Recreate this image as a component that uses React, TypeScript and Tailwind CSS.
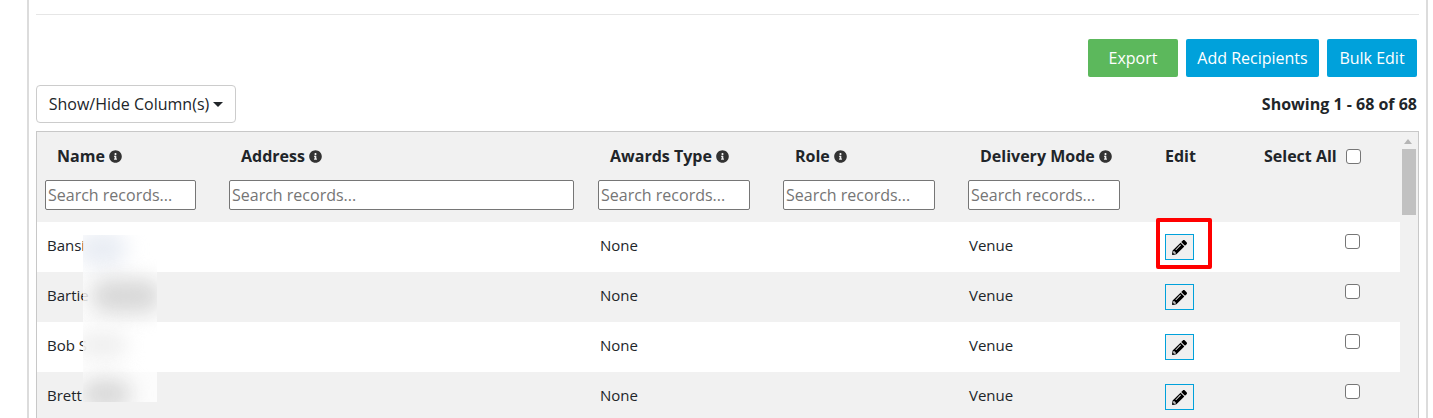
import { FaInfoCircle, FaPencilAlt } from "react-icons/fa";

const font = "font-['Open_Sans',sans-serif]";

const columns = [
  { label: "Name", width: "w-[184px]", inputWidth: "w-[151px]" },
  { label: "Address", width: "w-[369px]", inputWidth: "w-[345px]" },
  { label: "Awards Type", width: "w-[185px]", inputWidth: "w-[152px]" },
  { label: "Role", width: "w-[185px]", inputWidth: "w-[152px]" },
  { label: "Delivery Mode", width: "w-[185px]", inputWidth: "w-[152px]" },
];

const rows = [
  { name: "Bansi", bg: "bg-white" },
  { name: "Bartie", bg: "bg-[#f1f1f1]" },
  { name: "Bob S", bg: "bg-white" },
  { name: "Brett", bg: "bg-[#f1f1f1]" },
];

function Checkbox() {
  return <span className="block h-[15px] w-[15px] rounded-[3px] border border-[#767676] bg-white" />;
}

function HeaderCell({ label, width, inputWidth }: (typeof columns)[number]) {
  return (
    <div className={`${width} shrink-0 pt-[13px]`}>
      <div className="flex h-[22px] items-center gap-[4px] pl-[20px] text-[16px] font-bold text-[#212529]">
        {label}
        <FaInfoCircle className="h-[13px] w-[13px] text-[#333]" />
      </div>
      <div className="pl-[8px] pt-[13px]">
        <input
          placeholder="Search records..."
          className={`${inputWidth} h-[30px] rounded-[2px] border border-[#767676] bg-white px-[2px] text-[16px] text-[#333] placeholder:text-[#757575]`}
        />
      </div>
    </div>
  );
}

function Row({ name, bg }: { name: string; bg: string }) {
  return (
    <div className={`flex h-[50px] ${bg} text-[15px] text-[#212529]`}>
      <div className="flex w-[184px] shrink-0 items-center pb-[3px] pl-[10px]">{name}</div>
      <div className="w-[369px] shrink-0" />
      <div className="flex w-[185px] shrink-0 items-center pb-[3px] pl-[10px]">None</div>
      <div className="w-[185px] shrink-0" />
      <div className="flex w-[185px] shrink-0 items-center pb-[3px] pl-[9px]">Venue</div>
      <div className="w-[200px] shrink-0 pl-[20px] pt-[12px]">
        <button className="flex h-[26px] w-[29px] items-center justify-center border border-[#00a1db] bg-[#f0f0f0]">
          <FaPencilAlt className="h-[15px] w-[15px] text-black" />
        </button>
      </div>
      <div className="pt-[12px]">
        <Checkbox />
      </div>
    </div>
  );
}

export default function App() {
  return (
    <div className={`h-[418px] w-[1433px] overflow-hidden bg-white ${font}`}>
      <div className="ml-[27px] mr-[5px] h-full border-x-2 border-[#dcdcdc] pl-[7px] pr-[7px] pt-[14px]">
        <div className="border-t border-[#e6e6e6]" />

        <div className="flex justify-end gap-[8px] pr-[2px] pt-[24px]">
          <button className="h-[38px] w-[90px] rounded-[2px] bg-[#5cb85c] text-[16px] text-white">Export</button>
          <button className="h-[38px] w-[133px] rounded-[2px] bg-[#00a1db] text-[16px] text-white">Add Recipients</button>
          <button className="h-[38px] w-[90px] rounded-[2px] bg-[#00a1db] text-[16px] text-white">Bulk Edit</button>
        </div>

        <div className="flex items-center justify-between pr-[2px] pt-[8px]">
          <button className="flex h-[38px] w-[200px] items-center justify-center gap-[4px] rounded-[4px] border border-[#ccc] bg-white text-[16px] text-[#212529]">
            Show/Hide Column(s)
            <span className="mt-[1px] border-x-[5px] border-t-[5px] border-x-transparent border-t-[#212529]" />
          </button>
          <span className="text-[16px] font-bold text-[#212529]">Showing 1 - 68 of 68</span>
        </div>

        <div className="relative mt-[8px] h-[300px] border-x border-t border-[#c8c8c8] bg-[#f1f1f1]">
          <div className="flex h-[90px]">
            {columns.map((col) => (
              <HeaderCell key={col.label} {...col} />
            ))}
            <div className="w-[99px] shrink-0 pl-[20px] pt-[13px]">
              <span className="flex h-[22px] items-center text-[16px] font-bold text-[#212529]">Edit</span>
            </div>
            <div className="mt-[13px] flex h-[22px] shrink-0 items-center gap-[9px] whitespace-nowrap pl-[20px] text-[16px] font-bold text-[#212529]">
              Select All
              <Checkbox />
            </div>
          </div>

          <div className="w-[1363px]">
            {rows.map((row) => (
              <Row key={row.name} {...row} />
            ))}
          </div>

          {/* scrollbar */}
          <div className="absolute right-0 top-0 h-full w-[17px]">
            <span className="absolute left-[3px] top-[7px] border-x-[4px] border-b-[5px] border-x-transparent border-b-[#b5b5b5]" />
            <div className="absolute left-[1px] top-[17px] h-[66px] w-[14px] bg-[#c1c1c1]" />
          </div>

          {/* highlight round the edit button */}
          <div className="absolute left-[1119px] top-[86px] h-[51px] w-[56px] rounded-[2px] border-[4px] border-[#ff0000]" />

          {/* blurred-out surnames */}
          <div className="absolute left-[46px] top-[103px] h-[167px] w-[74px] overflow-hidden bg-white/80">
            <div className="absolute -left-[6px] -top-[4px] h-[36px] w-[50px] rounded-full bg-[#e9edf4] blur-[10px]" />
            <div className="absolute left-[8px] top-[44px] h-[34px] w-[70px] rounded-full bg-[#d8d8d8] blur-[10px]" />
            <div className="absolute -left-[6px] top-[96px] h-[28px] w-[50px] rounded-full bg-[#efefef] blur-[10px]" />
            <div className="absolute -left-[2px] top-[144px] h-[30px] w-[50px] rounded-full bg-[#d8d8d8] blur-[10px]" />
          </div>
        </div>
      </div>
    </div>
  );
}
